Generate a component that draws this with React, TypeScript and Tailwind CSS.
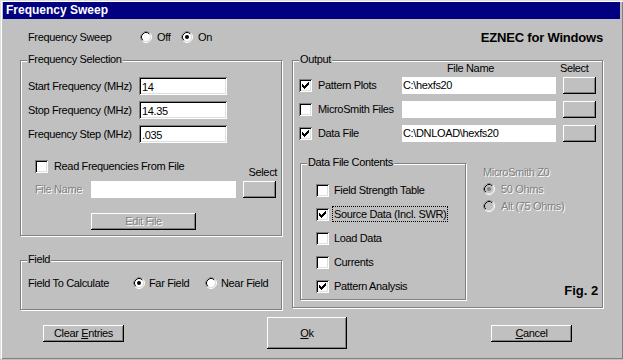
import type { ReactNode } from "react";

const sunken =
  "shadow-[inset_1px_1px_0_#808080,inset_-1px_-1px_0_#fff,inset_2px_2px_0_#000,inset_-2px_-2px_0_#dfdfdf]";
const raised = "shadow-[inset_-1px_-1px_0_#000,inset_1px_1px_0_#fff,inset_-2px_-2px_0_#808080]";
const dim = "text-[#808080] [text-shadow:1px_1px_0_#fff]";

function Check({ checked = false }: { checked?: boolean }) {
  return (
    <span className={`flex h-[13px] w-[13px] shrink-0 items-center justify-center bg-white ${sunken}`}>
      {checked && (
        <svg width="7" height="7" viewBox="0 0 7 7" shapeRendering="crispEdges" aria-hidden>
          <rect x="0" y="2" width="1" height="3" />
          <rect x="1" y="3" width="1" height="3" />
          <rect x="2" y="4" width="1" height="3" />
          <rect x="3" y="3" width="1" height="3" />
          <rect x="4" y="2" width="1" height="3" />
          <rect x="5" y="1" width="1" height="3" />
          <rect x="6" y="0" width="1" height="3" />
        </svg>
      )}
    </span>
  );
}

function Radio({ checked = false, disabled = false }: { checked?: boolean; disabled?: boolean }) {
  return (
    <svg width="12" height="12" viewBox="0 0 12 12" className="shrink-0" aria-hidden>
      <circle cx="6" cy="6" r="5.5" fill="none" stroke="#fff" />
      <path d="M2.11 9.89A5.5 5.5 0 0 1 9.89 2.11" fill="none" stroke="#808080" />
      <circle cx="6" cy="6" r="4.5" fill={disabled ? "#c0c0c0" : "#fff"} stroke="#dfdfdf" />
      <path d="M2.82 9.18A4.5 4.5 0 0 1 9.18 2.82" fill="none" stroke="#000" />
      {checked && <circle cx="6" cy="6" r="2" fill={disabled ? "#808080" : "#000"} />}
    </svg>
  );
}

function Group({ label, className, children }: { label: string; className: string; children: ReactNode }) {
  return (
    <div className={`relative border border-[#808080] shadow-[inset_1px_1px_0_#fff,1px_1px_0_#fff] ${className}`}>
      <span className="absolute -top-[8px] left-[6px] bg-[#c0c0c0] px-[1px] leading-[13px]">{label}</span>
      {children}
    </div>
  );
}

function Button({ className, children, disabled = false }: { className: string; children?: ReactNode; disabled?: boolean }) {
  return (
    <div className={`flex items-center justify-center bg-[#c0c0c0] ${raised} ${disabled ? dim : ""} ${className}`}>
      {children}
    </div>
  );
}

export default function App() {
  const freqRows = [
    ["Start Frequency (MHz)", "14"],
    ["Stop Frequency (MHz)", "14.35"],
    ["Frequency Step (MHz)", ".035"],
  ];
  const outputRows: [string, string, boolean][] = [
    ["Pattern Plots", "C:\\hexfs20", true],
    ["MicroSmith Files", "", false],
    ["Data File", "C:\\DNLOAD\\hexfs20", true],
  ];
  const contents: [string, boolean][] = [
    ["Field Strength Table", false],
    ["Source Data (Incl. SWR)", true],
    ["Load Data", false],
    ["Currents", false],
    ["Pattern Analysis", true],
  ];

  return (
    <div className="h-[360px] w-[623px] whitespace-nowrap bg-[#c0c0c0] font-['Liberation_Sans',Arial,sans-serif] text-[11px] leading-[13px] tracking-[-0.35px] text-black">
      <div className="flex h-[359px] w-[623px] flex-col pt-[2px] shadow-[inset_1px_1px_0_#dfdfdf,inset_2px_2px_0_#fff,inset_-1px_-1px_0_#808080]">
        <div className="mx-[3px] flex h-[17px] items-center bg-[#000080] pl-[3px] text-[12px] font-bold tracking-normal text-white">
          Frequency Sweep
        </div>

        <div className="mt-[10px] flex h-[16px] items-center pl-[28px] pr-[20px]">
          <span className="w-[112px]">Frequency Sweep</span>
          <span className="flex w-[41px] items-center gap-[5px]">
            <Radio />
            Off
          </span>
          <span className="flex items-center gap-[5px]">
            <Radio checked />
            On
          </span>
          <span className="ml-auto text-[13px] font-bold tracking-[-0.2px]">EZNEC for Windows</span>
        </div>

        <div className="mt-[15px] flex gap-[9px] px-[20px]">
          <div className="flex w-[263px] flex-col">
            <Group label="Frequency Selection" className="h-[176px] w-[262px] pl-[7px] pt-[16px]">
              <div className="flex flex-col gap-[6px]">
                {freqRows.map(([label, value]) => (
                  <div key={label} className="flex h-[18px] items-center">
                    <span className="w-[111px]">{label}</span>
                    <span className={`flex h-[18px] w-[88px] items-center bg-white pl-[3px] pt-[2px] ${sunken}`}>{value}</span>
                  </div>
                ))}
              </div>
              <div className="mt-[17px] flex h-[19px] pl-[7px]">
                <span className="flex items-center gap-[6px] self-start">
                  <Check />
                  Read Frequencies From File
                </span>
                <span className="ml-auto mr-[4px] self-end">Select</span>
              </div>
              <div className="mt-[2px] flex h-[17px] items-center pl-[7px]">
                <span className={`w-[56px] ${dim}`}>File Name</span>
                <span className="h-[17px] w-[145px] bg-white" />
                <Button className="ml-[7px] h-[17px] w-[33px]" />
              </div>
              <Button disabled className="ml-[63px] mt-[15px] h-[17px] w-[105px]">
                Edit File
              </Button>
            </Group>

            <Group label="Field" className="mt-[24px] h-[50px] w-[262px] pl-[7px] pt-[14px]">
              <div className="flex h-[16px] items-center">
                <span className="w-[105px]">Field To Calculate</span>
                <span className="flex w-[72px] items-center gap-[4px]">
                  <Radio checked />
                  Far Field
                </span>
                <span className="flex items-center gap-[4px]">
                  <Radio />
                  Near Field
                </span>
              </div>
            </Group>
          </div>

          <Group label="Output" className="h-[248px] w-[311px] pl-[6px] pt-[1px]">
            <div className="flex h-[13px]">
              <span className="w-[148px]" />
              <span className="w-[113px]">File Name</span>
              <span>Select</span>
            </div>
            <div className="mt-[2px] flex flex-col gap-[7px]">
              {outputRows.map(([label, value, on]) => (
                <div key={label} className="flex h-[17px] items-center">
                  <Check checked={on} />
                  <span className="ml-[6px] w-[84px]">{label}</span>
                  <span className="flex h-[17px] w-[154px] items-center bg-white pl-[1px]">{value}</span>
                  <Button className="ml-[7px] h-[17px] w-[33px]" />
                </div>
              ))}
            </div>

            <div className="mt-[21px] flex h-[137px]">
              <Group label="Data File Contents" className="ml-[1px] h-[137px] w-[166px] shrink-0 pl-[15px] pt-[18px]">
                <div className="flex flex-col gap-[8px]">
                  {contents.map(([label, on], i) => (
                    <div key={label} className="flex h-[16px] items-center">
                      <Check checked={on} />
                      <span
                        className={`ml-[3px] border px-[1px] leading-[14px] ${
                          i === 1 ? "border-dotted border-black" : "border-transparent"
                        }`}
                      >
                        {label}
                      </span>
                    </div>
                  ))}
                </div>
              </Group>

              <div className={`ml-[17px] flex flex-col self-start pt-[3px] ${dim}`}>
                <span className="h-[13px]">MicroSmith Z0</span>
                <div className="mt-[2px] flex flex-col gap-[1px]">
                  <span className="flex h-[16px] items-center gap-[6px]">
                    <Radio checked disabled />
                    50 Ohms
                  </span>
                  <span className="flex h-[16px] items-center gap-[6px]">
                    <Radio disabled />
                    Alt (75 Ohms)
                  </span>
                </div>
              </div>

              <span className="mb-[1px] ml-auto mr-[13px] self-end text-[13px] font-bold leading-[16px] tracking-normal">
                Fig. 2
              </span>
            </div>
          </Group>
        </div>

        <div className="mt-[7px] flex h-[32px] items-center pl-[43px]">
          <Button className="h-[17px] w-[81px]">
            <span>
              Clear <u className="underline-offset-[1px]">E</u>ntries
            </span>
          </Button>
          <Button className="ml-[143px] h-[32px] w-[80px]">
            <span>
              <u className="underline-offset-[1px]">O</u>k
            </span>
          </Button>
          <Button className="ml-[144px] h-[17px] w-[81px]">
            <span>
              <u className="underline-offset-[1px]">C</u>ancel
            </span>
          </Button>
        </div>
      </div>
    </div>
  );
}
